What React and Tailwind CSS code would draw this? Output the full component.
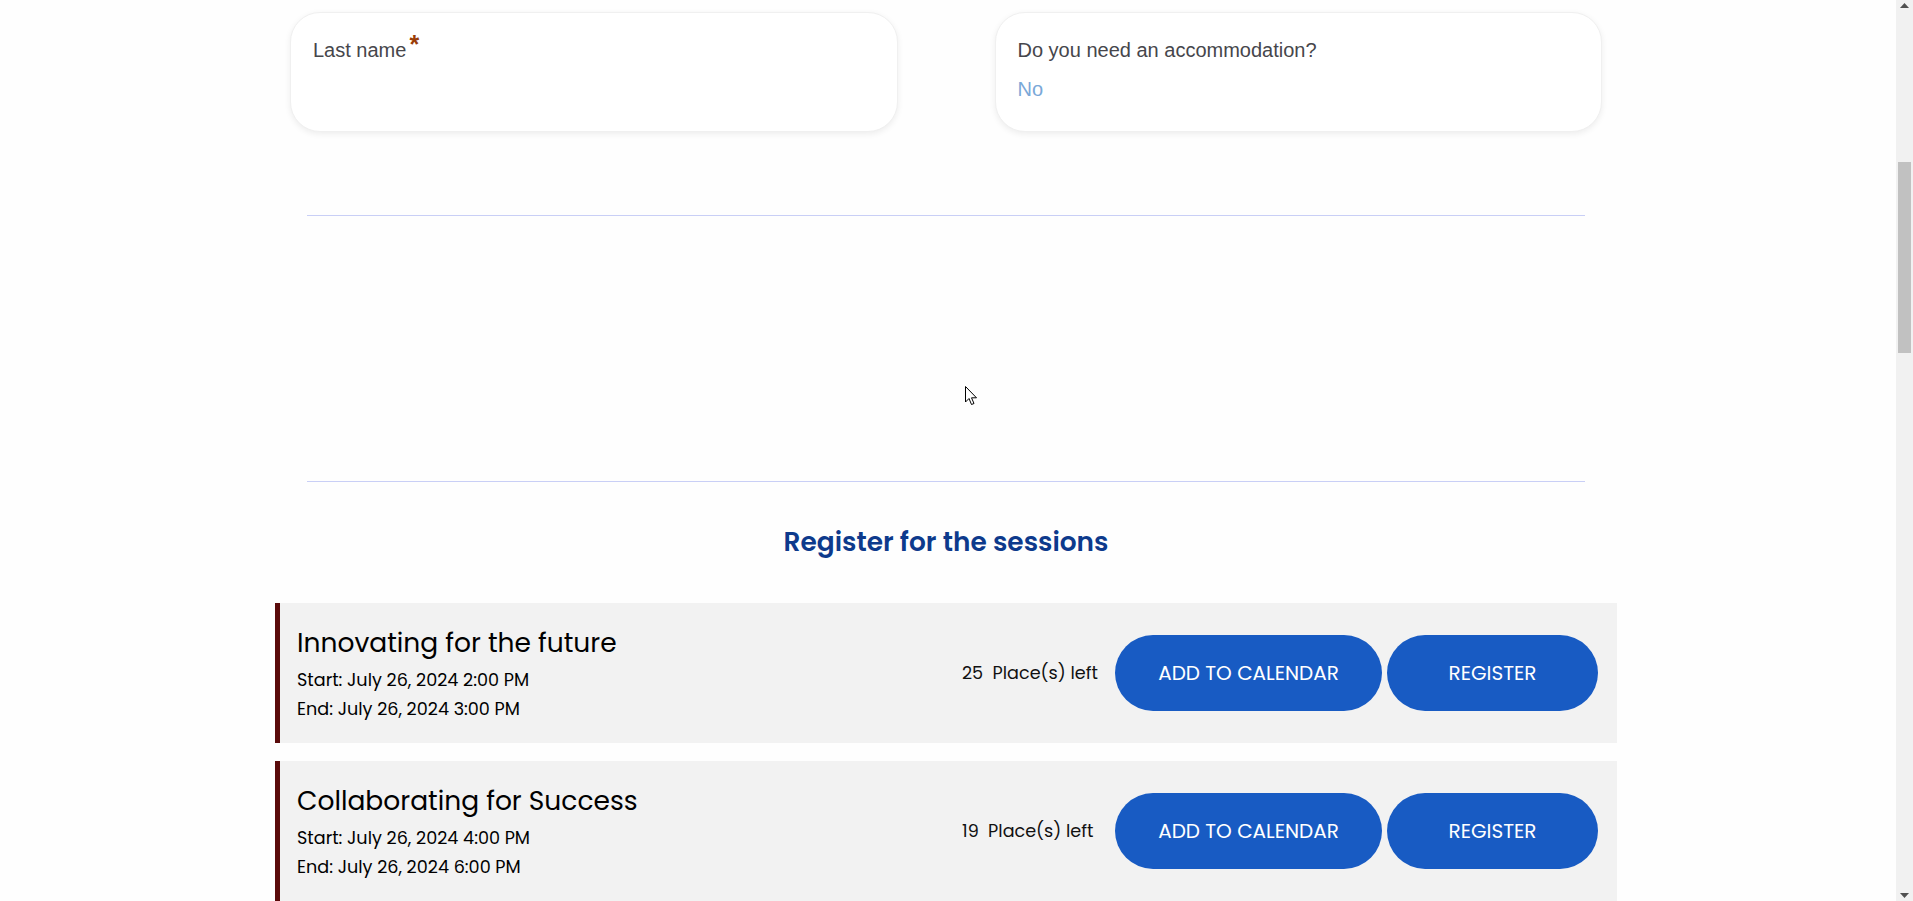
import React from "react";

const poppins = { fontFamily: '"Poppins", "Inter", "Noto Sans", sans-serif' };
const arial = { fontFamily: '"Liberation Sans", Arial, sans-serif' };

function Card({ label, required, value }) {
  return (
    <div className="h-[120px] rounded-[30px] border border-[#f0f0f0] bg-white px-[22px] pt-[25px] shadow-[0_2px_6px_rgba(0,0,0,0.07)]" style={arial}>
      <div className="flex items-start text-[20px] leading-[24px] text-[#46464b]">
        <span>{label}</span>
        {required && <span className="relative -top-[6px] ml-[3px] text-[25px] font-bold leading-[24px] text-[#9a3d08]">*</span>}
      </div>
      {value && <div className="mt-[15px] text-[20px] leading-[24px] text-[#7aa8d8]">{value}</div>}
    </div>
  );
}

function Session({ title, start, end, places }) {
  return (
    <div className="flex h-[140px] border-l-[5px] border-[#5a0b0b] bg-[#f2f2f2] pl-[17px] pr-[19px]" style={poppins}>
      <div className="flex flex-col pt-[23px] text-black">
        <div className="mb-[6px] text-[26.5px] leading-[34px]">{title}</div>
        <div className="text-[17.6px] leading-[29px]">Start: {start}</div>
        <div className="text-[17.6px] leading-[29px]">End: {end}</div>
      </div>
      <div className="ml-auto flex items-center">
        <div className="w-[153px] whitespace-pre text-[17.6px] text-[#111]">{places}  Place(s) left</div>
        <button className="h-[76px] w-[267px] rounded-full bg-[#185bc3] text-[20px] text-white">ADD TO CALENDAR</button>
        <button className="ml-[5px] h-[76px] w-[211px] rounded-full bg-[#185bc3] text-[20px] text-white">REGISTER</button>
      </div>
    </div>
  );
}

export default function App() {
  return (
    <div className="relative flex h-screen w-full overflow-hidden bg-[#fefefe]">
      <main className="min-w-0 flex-1 pl-[275px]">
        <div className="w-[1342px] pt-[12px]">
          <div className="grid grid-cols-2 gap-[97px] px-[15px]">
            <Card label="Last name" required />
            <Card label="Do you need an accommodation?" value="No" />
          </div>
          <div className="mx-[32px] mt-[83px] h-px bg-[#c9cff6]" />
          <div className="mx-[32px] mt-[265px] h-px bg-[#c9cff6]" />
          <h2 className="mt-[43px] text-center text-[26.4px] font-semibold leading-[34px] text-[#0d3a8c]" style={poppins}>
            Register for the sessions
          </h2>
          <div className="mt-[44px] flex flex-col gap-[18px]">
            <Session title="Innovating for the future" start="July 26, 2024 2:00 PM" end="July 26, 2024 3:00 PM" places="25" />
            <Session title="Collaborating for Success" start="July 26, 2024 4:00 PM" end="July 26, 2024 6:00 PM" places="19" />
          </div>
        </div>
      </main>
      <div className="flex w-[17px] flex-col bg-[#f1f1f1]">
        <div className="flex h-[17px] items-start justify-center pt-[3px]">
          <svg width="9" height="5" viewBox="0 0 9 5"><path d="M4.5 0 L9 5 L0 5 Z" fill="#505050" /></svg>
        </div>
        <div className="mx-[2px] mt-[145px] h-[191px] bg-[#c1c1c1]" />
        <div className="mt-auto flex h-[17px] items-end justify-center pb-[3px]">
          <svg width="9" height="5" viewBox="0 0 9 5"><path d="M0 0 L9 0 L4.5 5 Z" fill="#505050" /></svg>
        </div>
      </div>
      <svg className="absolute left-[965px] top-[386px]" width="13" height="20" viewBox="0 0 13 20">
        <path d="M0.5 0.5 L0.5 16 L4 12.5 L6.5 18.5 L9 17.5 L6.5 11.8 L11.5 11.8 Z" fill="white" stroke="black" strokeWidth="1" strokeLinejoin="miter" />
      </svg>
    </div>
  );
}
